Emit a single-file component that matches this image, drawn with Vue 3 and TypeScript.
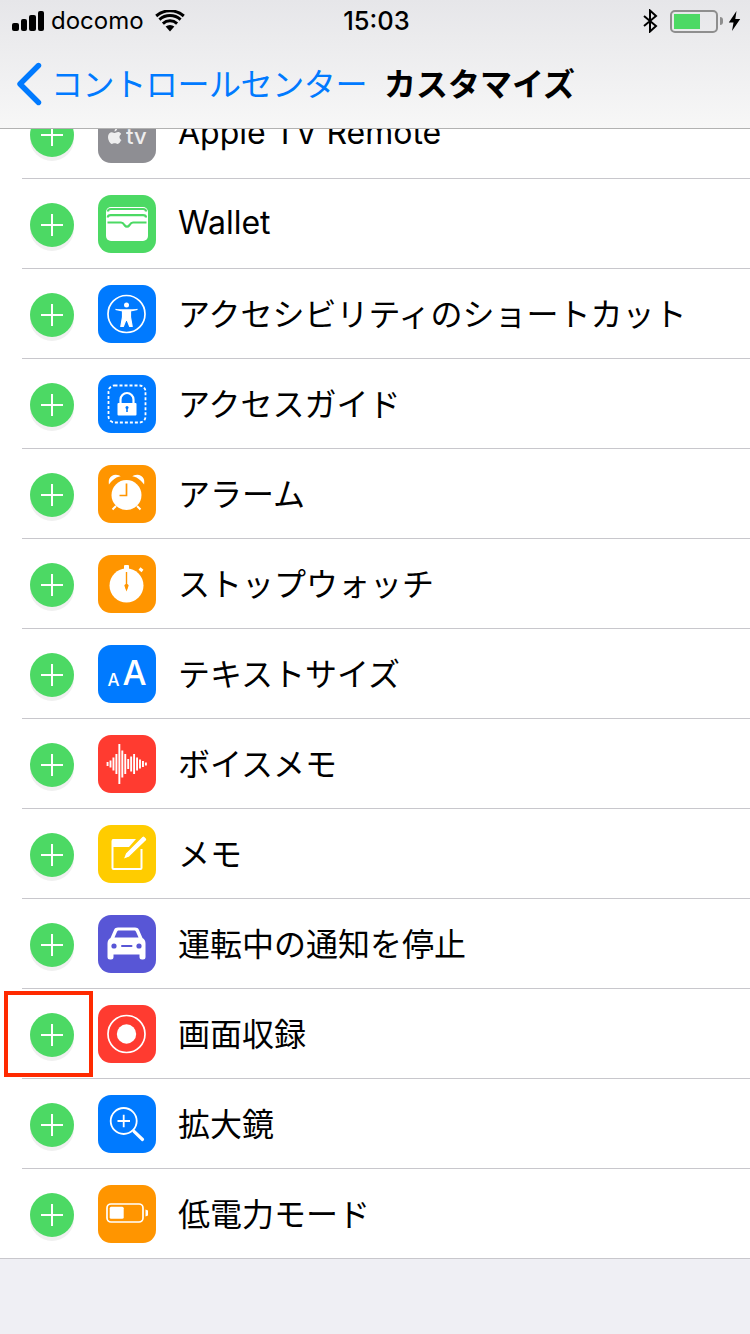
<template>
  <div class="page">
    <header class="top">
      <div class="status">
        <div class="status-left">
          <div class="signal">
            <i v-for="h in signalBars" :key="h" :style="{ height: h + 'px' }"></i>
          </div>
          <span class="carrier">docomo</span>
          <svg class="wifi" width="30" height="22" viewBox="0 0 30 22">
            <path d="M15 21.500 10.600 16.600a6.600 6.600 0 0 1 8.800 0Z" fill="#000" />
            <path d="M7.900 13.400a10.600 10.600 0 0 1 14.200 0M4.400 9.400a15.900 15.900 0 0 1 21.200 0M1.200 5.800a21 21 0 0 1 27.600 0" transform="translate(0 .2)" fill="none" stroke="#000" stroke-width="3" />
          </svg>
        </div>
        <span class="clock">15:03</span>
        <div class="status-right">
          <svg width="16" height="24" viewBox="0 0 16 24">
            <path d="M2 7l12 10-6 5.500V1.500l6 5.500L2 17" fill="none" stroke="#000" stroke-width="2" />
          </svg>
          <div class="battery"><div class="battery-fill"></div></div>
          <div class="battery-nub"></div>
          <svg class="bolt" width="13" height="20" viewBox="0 0 13 20">
            <path d="M8.500 0 .8 11.500H5.500L4 20l8.200-12H7.300Z" fill="#000" />
          </svg>
        </div>
      </div>
      <nav class="nav">
        <svg class="chevron" width="26" height="44" viewBox="0 0 26 44">
          <path d="M22.500 3.500 4 22l18.500 18.500" fill="none" stroke="#007aff" stroke-width="5.400" stroke-linecap="round" stroke-linejoin="round" />
        </svg>
        <span class="back">コントロールセンター</span>
        <span class="title">カスタマイズ</span>
      </nav>
    </header>

    <section class="list-clip">
      <ul class="list">
        <li v-for="row in rows" :key="row.label" class="row">
          <div v-if="row.icon === 'record'" class="highlight"></div>
          <div class="add">
            <svg width="44" height="44" viewBox="0 0 44 44">
              <path d="M11 22H33M22 11V33" stroke="#fff" stroke-width="2" />
            </svg>
          </div>
          <div class="icon" :style="{ background: row.color }">
            <svg width="58" height="58" viewBox="0 0 58 58">
              <template v-if="row.icon === 'tv'">
                <path d="M16.500 26.500c-.2-1.800 1.200-3.300 2.700-3.500.2 1.700-1.200 3.400-2.700 3.500ZM23 35.300c-.6 1.500-2 3.700-3.400 3.700-1.200 0-1.500-.7-2.900-.7s-1.800.7-2.900.7c-1.600 0-3.800-3.700-3.800-6.900 0-3.100 2-4.800 3.800-4.800 1.300 0 2.300.8 3 .8s1.800-1 3.200-1c1.100 0 2.400.5 3.200 1.800-2.600 1.700-2.200 5.400.8 6.400Z" fill="#fff" opacity=".85" />
                <text x="28" y="38.500" class="tv-text">tv</text>
              </template>
              <template v-else-if="row.icon === 'wallet'">
                <rect x="8" y="12" width="42" height="34" rx="5" fill="#fff" />
                <path d="M10 16.500c0-1.500 1-2.500 3-2.500H45c2 0 3 1 3 2.500M9.800 22.500c0-1.500 1-2.300 3-2.300H45c2 0 3 .8 3 2.300" fill="none" stroke="#4cd964" stroke-width="2.200" />
                <path d="M9.500 27.500H23c2 0 2.800 1.500 3.800 3 1.200 1.500 3.200 1.500 4.400 0 1-1.500 1.800-3 3.800-3H48.500" fill="none" stroke="#4cd964" stroke-width="2.200" />
              </template>
              <template v-else-if="row.icon === 'access'">
                <circle cx="28.500" cy="29" r="18.500" fill="none" stroke="#fff" stroke-width="1.700" />
                <circle cx="28.500" cy="20" r="2.500" fill="#fff" />
                <path d="M17.500 24.300 24.500 26V32L22.800 41.500H25.300L28.500 33.500 31.700 41.500H34.200L32.500 32V26L39.500 24.300" fill="#fff" stroke="#fff" stroke-width="1.200" stroke-linejoin="round" />
              </template>
              <template v-else-if="row.icon === 'guided'">
                <rect x="10.500" y="10.500" width="37" height="37" rx="6" fill="none" stroke="#fff" stroke-width="1.800" stroke-dasharray="3 2" />
                <path d="M22.500 29V24.500a6.500 6.500 0 0 1 13 0V29" fill="none" stroke="#fff" stroke-width="2.200" />
                <rect x="19.500" y="28" width="19" height="12.500" rx="1" fill="#fff" />
                <path d="M29 32.500V37" stroke="#007aff" stroke-width="1.600" />
                <circle cx="29" cy="32.500" r="1.500" fill="#007aff" />
              </template>
              <template v-else-if="row.icon === 'alarm'">
                <circle cx="28.500" cy="30" r="15" fill="#fff" />
                <path d="M11.500 17.500a6.500 6.500 0 0 1 9-6.500C17 12 14 14.500 11.500 17.500ZM45.500 17.500a6.500 6.500 0 0 0-9-6.500C40 12 43 14.500 45.500 17.500Z" fill="#fff" stroke="#fff" stroke-width="1.500" />
                <path d="M18 41l-3.500 3.500M39 41l3.500 3.500" stroke="#fff" stroke-width="2" />
                <path d="M28.500 18.500V30.500H21.500" fill="none" stroke="#ff9500" stroke-width="1.700" />
              </template>
              <template v-else-if="row.icon === 'stopwatch'">
                <circle cx="28.500" cy="30.500" r="17" fill="#fff" />
                <rect x="26" y="10" width="5" height="6" rx="1" fill="#fff" />
                <path d="M41.500 13.500l3 2.500" stroke="#fff" stroke-width="3" />
                <path d="M28.500 17V34" stroke="#ff9500" stroke-width="1.400" />
                <path d="M28.500 36.500 26.300 30.500a2.400 2.400 0 0 1 4.400 0Z" fill="#ff9500" />
              </template>
              <template v-else-if="row.icon === 'text'">
                <text x="9.500" y="40.500" class="aa-small">A</text>
                <text x="24.500" y="40" class="aa-big">A</text>
              </template>
              <template v-else-if="row.icon === 'voice'">
                <rect v-for="b in voiceBars" :key="b.x" :x="b.x" :y="29 - b.h / 2" width="1.900" :height="b.h" fill="#fff" />
              </template>
              <template v-else-if="row.icon === 'memo'">
                <path d="M43.500 24V43a1 1 0 0 1-1 1H15.500a1 1 0 0 1-1-1V16a1 1 0 0 1 1-1H36" fill="none" stroke="#fff" stroke-width="2" />
                <path d="M14 16a2 2 0 0 1 2-2H38L31 22H14Z" fill="#fff" />
                <path d="M25 34.500 27.500 28 44 11.500a2 2 0 0 1 2.800 0l1.500 1.500a2 2 0 0 1 0 2.800L31.500 32Z" fill="#fff" stroke="#ffcc00" stroke-width="1.300" />
              </template>
              <template v-else-if="row.icon === 'car'">
                <path d="M9.500 28.500c0-2.500 1-4.500 3-5.500l3.500-8c.8-1.800 2-2.500 4-2.500h17c2 0 3.200.7 4 2.500l3.500 8c2 1 3 3 3 5.500V42a2.500 2.500 0 0 1-2.500 2.500h-1A2.500 2.500 0 0 1 41.500 42V39.500h-26V42a2.500 2.500 0 0 1-2.500 2.500h-1A2.500 2.500 0 0 1 9.500 42Z" fill="#fff" />
                <path d="M16.500 22.500l2.500-5.800c.4-.8 1-1.200 2-1.200h15c1 0 1.600.4 2 1.200l2.500 5.800Z" fill="#5856d6" />
                <circle cx="16" cy="31" r="2.600" fill="#5856d6" />
                <circle cx="41" cy="31" r="2.600" fill="#5856d6" />
                <rect x="23" y="30" width="11.500" height="2" rx="1" fill="#5856d6" />
              </template>
              <template v-else-if="row.icon === 'record'">
                <circle cx="28.500" cy="29" r="18.500" fill="none" stroke="#fff" stroke-width="1.700" />
                <circle cx="28.500" cy="29" r="9.700" fill="#fff" />
              </template>
              <template v-else-if="row.icon === 'zoom'">
                <circle cx="25.700" cy="26" r="13" fill="none" stroke="#fff" stroke-width="1.800" />
                <path d="M19.500 26H32M25.700 19.800V32.200" stroke="#fff" stroke-width="1.800" />
                <path d="M36 36.300 44.500 44.500" stroke="#fff" stroke-width="3.200" stroke-linecap="round" />
              </template>
              <template v-else-if="row.icon === 'power'">
                <rect x="9" y="19" width="36" height="18" rx="4" fill="none" stroke="#fff" stroke-width="1.700" />
                <rect x="11.700" y="21.700" width="14" height="12" rx="1.500" fill="#fff" />
                <path d="M47.500 24.500 50 25.500V30.500L47.500 31.500Z" fill="#fff" />
              </template>
            </svg>
          </div>
          <span class="label">{{ row.label }}</span>
        </li>
      </ul>
    </section>
  </div>
</template>

<script setup lang="ts">
interface Row {
  label: string;
  icon: string;
  color: string;
}

const signalBars = [8, 12, 16, 20];

const green = "#4cd964";
const blue = "#007aff";
const orange = "#ff9500";
const red = "#ff3b30";

const rows: Row[] = [
  { label: "Apple TV Remote", icon: "tv", color: "#8e8e93" },
  { label: "Wallet", icon: "wallet", color: green },
  { label: "アクセシビリティのショートカット", icon: "access", color: blue },
  { label: "アクセスガイド", icon: "guided", color: blue },
  { label: "アラーム", icon: "alarm", color: orange },
  { label: "ストップウォッチ", icon: "stopwatch", color: orange },
  { label: "テキストサイズ", icon: "text", color: blue },
  { label: "ボイスメモ", icon: "voice", color: red },
  { label: "メモ", icon: "memo", color: "#ffcc00" },
  { label: "運転中の通知を停止", icon: "car", color: "#5856d6" },
  { label: "画面収録", icon: "record", color: red },
  { label: "拡大鏡", icon: "zoom", color: blue },
  { label: "低電力モード", icon: "power", color: orange },
];

// bar heights read off the waveform, left to right
const voiceBars = [4, 7, 13, 20, 40, 27, 20, 10, 15, 20, 13, 9, 6, 3].map((h, i) => ({
  x: 8.600 + i * 2.950,
  h,
}));
</script>

<style>
html,
body {
  margin: 0;
  background: #efeff4;
}
</style>

<style scoped>
.page {
  height: 1334px;
  overflow: hidden;
  background: #efeff4;
  font-family: Inter, "Noto Sans CJK JP", sans-serif;
  color: #000;
}

.top {
  position: relative;
  z-index: 2;
  height: 128px;
  background: linear-gradient(#e6e6e9, #f7f7f7);
  border-bottom: 1px solid #b2b2b2;
}

.status {
  display: grid;
  grid-template-columns: 1fr auto 1fr;
  align-items: center;
  box-sizing: border-box;
  height: 40px;
  padding: 2px 9px 0 12px;
}

.status-left {
  display: flex;
  align-items: center;
}

.signal {
  display: flex;
  align-items: flex-end;
  gap: 2px;
  height: 20px;
  margin-right: 7px;
}

.signal i {
  display: block;
  width: 6.500px;
  border-radius: 2px;
  background: #000;
}

.carrier {
  font-size: 24px;
  line-height: 38px;
}

.wifi {
  margin-left: 11px;
}

.clock {
  font-size: 25.500px;
  font-weight: 500;
  line-height: 38px;
}

.status-right {
  display: flex;
  align-items: center;
  justify-content: flex-end;
}

.battery {
  box-sizing: border-box;
  width: 48px;
  height: 23px;
  margin-left: 12px;
  padding: 2px;
  border: 2px solid #8e8e8e;
  border-radius: 5px;
}

.battery-fill {
  width: 26px;
  height: 100%;
  background: #4cd964;
}

.battery-nub {
  width: 3px;
  height: 8px;
  margin-left: 2px;
  border-radius: 0 3px 3px 0;
  background: #8e8e8e;
}

.bolt {
  margin-left: 5px;
}

.nav {
  display: flex;
  align-items: center;
  height: 88px;
  padding-left: 16px;
  font-size: 32px;
}

.chevron {
  flex: none;
  margin-right: 9px;
}

.back {
  margin-bottom: 4px;
  color: #007aff;
  letter-spacing: -0.4px;
  white-space: nowrap;
}

.title {
  margin: 0 0 4px 17px;
  font-weight: 700;
  white-space: nowrap;
}

.list-clip {
  overflow: hidden;
  height: 1130px;
}

.list {
  margin: -40px 0 0;
  padding: 0;
  list-style: none;
  background: #fff;
  border-bottom: 1px solid #c8c7cc;
}

.row {
  position: relative;
  display: flex;
  align-items: center;
  height: 90px;
  box-sizing: border-box;
  padding-left: 30px;
}

.row:not(:last-child)::after {
  content: "";
  position: absolute;
  left: 22px;
  right: 0;
  bottom: 0;
  height: 1px;
  background: #c8c7cc;
}

.row:last-child {
  height: 89px;
}

.add {
  flex: none;
  width: 44px;
  height: 44px;
  margin-top: 2px;
  border-radius: 50%;
  background: #4cd964;
  box-shadow: 0 4px 0 #f0f0f0;
}

.add svg,
.icon svg {
  display: block;
}

.icon {
  flex: none;
  width: 58px;
  height: 58px;
  margin-left: 24px;
  border-radius: 13px;
}

.label {
  margin: 0 0 4px 22px;
  font-size: 32px;
  white-space: nowrap;
}

.highlight {
  position: absolute;
  left: 4px;
  top: 2px;
  box-sizing: border-box;
  width: 89px;
  height: 86px;
  border: 4px solid #ff2a00;
}

.tv-text {
  font-family: Inter, sans-serif;
  font-size: 22px;
  font-weight: 500;
  fill: #fff;
  opacity: 0.85;
}

.aa-small,
.aa-big {
  font-family: Inter, sans-serif;
  font-weight: 500;
  fill: #fff;
}

.aa-small {
  font-size: 17px;
}

.aa-big {
  font-size: 34px;
}
</style>
